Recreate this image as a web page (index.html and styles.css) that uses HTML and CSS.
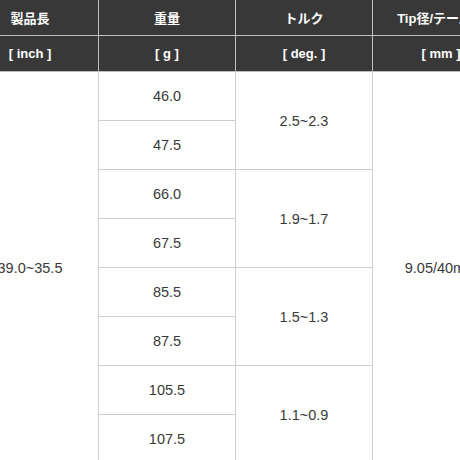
FILE: index.html
```html
<!DOCTYPE html>
<html lang="ja">
<head>
<meta charset="utf-8">
<link rel="stylesheet" href="styles.css">
</head>
<body>
<table class="spec">
  <colgroup><col><col><col><col></colgroup>
  <thead>
    <tr class="h1">
      <th>製品長</th><th>重量</th><th>トルク</th><th>Tip径/テーパー</th>
    </tr>
    <tr class="h2">
      <th>[ inch ]</th><th>[ g ]</th><th>[ deg. ]</th><th>[ mm ]</th>
    </tr>
  </thead>
  <tbody>
    <tr><td rowspan="8">39.0~35.5</td><td>46.0</td><td rowspan="2">2.5~2.3</td><td rowspan="8">9.05/40mm</td></tr>
    <tr><td>47.5</td></tr>
    <tr><td>66.0</td><td rowspan="2">1.9~1.7</td></tr>
    <tr><td>67.5</td></tr>
    <tr><td>85.5</td><td rowspan="2">1.5~1.3</td></tr>
    <tr><td>87.5</td></tr>
    <tr><td>105.5</td><td rowspan="2">1.1~0.9</td></tr>
    <tr><td>107.5</td></tr>
  </tbody>
</table>
</body>
</html>
```
FILE: styles.css
```css
html, body {
  margin: 0;
  padding: 0;
  background: #fff;
  overflow: hidden;
}
body {
  font-family: "Liberation Sans", "Noto Sans CJK JP", sans-serif;
  color: #3a3a3a;
}
.spec {
  border-collapse: collapse;
  table-layout: fixed;
  width: 548px;
  margin-left: -39px;
  margin-top: -1px;
}
.spec col {
  width: 137px;
}
.spec th,
.spec td {
  border: 1px solid #cfcfcf;
  text-align: center;
  vertical-align: middle;
  padding: 0;
  white-space: nowrap;
  overflow: hidden;
}
.spec th {
  background: #383838;
  color: #fff;
  font-weight: bold;
  font-size: 13px;
  border-color: #bdbdbd;
}
.spec .h1 th {
  height: 35px;
}
.spec .h2 th {
  height: 35px;
}
.spec td {
  height: 48px;
  font-size: 14.5px;
  font-weight: 400;
}
```
